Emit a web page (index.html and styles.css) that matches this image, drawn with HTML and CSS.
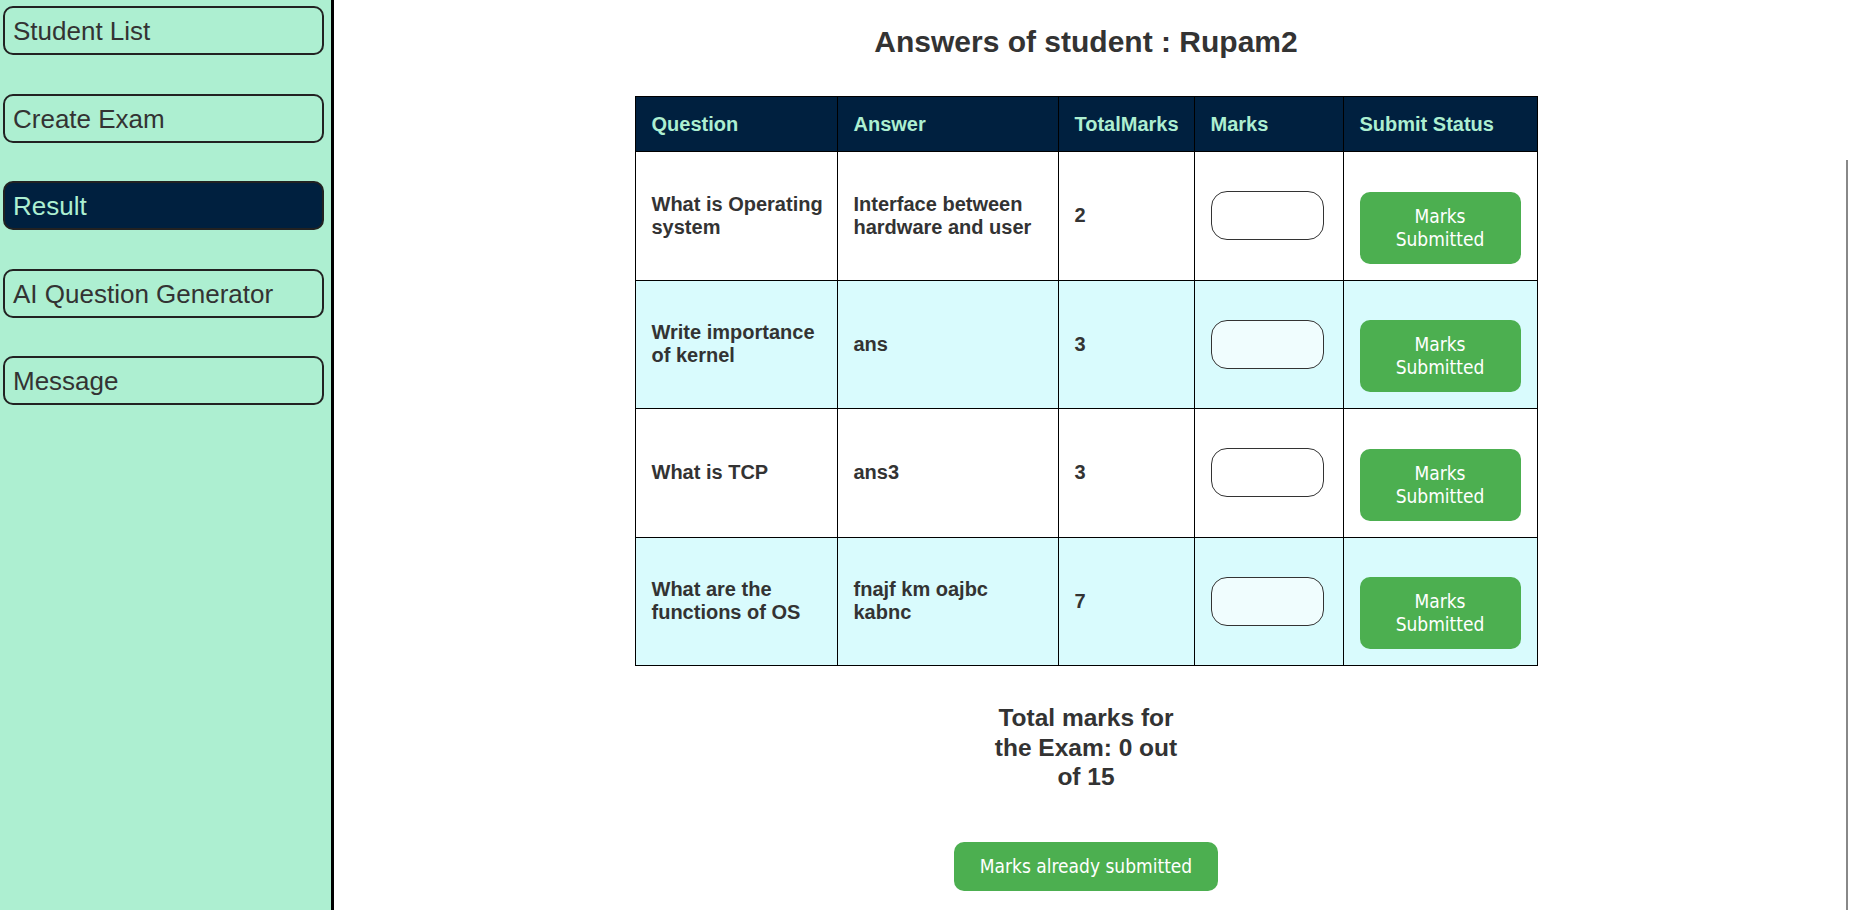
FILE: index.html
```html
<!DOCTYPE html>
<html lang="en">
<head>
<meta charset="utf-8">
<title>Answers of student</title>
<link rel="stylesheet" href="styles.css">
</head>
<body>
<div class="app">
  <aside class="sidebar">
    <div class="nav-item">Student List</div>
    <div class="nav-item">Create Exam</div>
    <div class="nav-item active">Result</div>
    <div class="nav-item">AI Question Generator</div>
    <div class="nav-item">Message</div>
  </aside>
  <main class="main">
    <h2 class="title">Answers of student : Rupam2</h2>
    <table class="answers">
      <colgroup>
        <col class="c-q"><col class="c-a"><col class="c-t"><col class="c-m"><col class="c-s">
      </colgroup>
      <thead>
        <tr><th>Question</th><th>Answer</th><th>TotalMarks</th><th>Marks</th><th>Submit Status</th></tr>
      </thead>
      <tbody>
        <tr>
          <td>What is Operating system</td>
          <td>Interface between hardware and user</td>
          <td>2</td>
          <td><input class="mark-input" type="text"></td>
          <td><button class="status-btn">Marks Submitted</button></td>
        </tr>
        <tr>
          <td>Write importance of kernel</td>
          <td>ans</td>
          <td>3</td>
          <td><input class="mark-input" type="text"></td>
          <td><button class="status-btn">Marks Submitted</button></td>
        </tr>
        <tr>
          <td>What is TCP</td>
          <td>ans3</td>
          <td>3</td>
          <td><input class="mark-input" type="text"></td>
          <td><button class="status-btn">Marks Submitted</button></td>
        </tr>
        <tr>
          <td>What are the functions of OS</td>
          <td>fnajf km oajbc kabnc</td>
          <td>7</td>
          <td><input class="mark-input" type="text"></td>
          <td><button class="status-btn">Marks Submitted</button></td>
        </tr>
      </tbody>
    </table>
    <h3 class="total">Total marks for the Exam: 0 out of 15</h3>
    <button class="submit-btn">Marks already submitted</button>
  </main>
</div>
<div class="scroll-line"></div>
</body>
</html>
```
FILE: styles.css
```css
html, body {
  margin: 0;
  padding: 0;
  height: 100%;
  overflow: hidden;
  background: #fff;
  font-family: "Liberation Sans", Arial, sans-serif;
}

.app {
  display: flex;
  height: 910px;
}

.sidebar {
  width: 331px;
  flex: 0 0 331px;
  background: #adefd1;
  border-right: 3px solid #000;
  padding-top: 6px;
  display: flex;
  flex-direction: column;
  gap: 38.5px;
  box-sizing: content-box;
}

.nav-item {
  margin: 0 7px 0 3px;
  border: 2px solid #222;
  border-radius: 10px;
  padding: 8px 8px 6px;
  font-size: 26px;
  line-height: 31px;
  color: #333;
}

.nav-item.active {
  background: #00203f;
  color: #adefd1;
}

.main {
  flex: 1;
  display: flex;
  flex-direction: column;
  align-items: center;
  padding-right: 14px;
}

.title {
  margin: 25px 0 0;
  font-size: 30px;
  line-height: 34px;
  font-weight: bold;
  color: #333;
}

.answers {
  margin-top: 37px;
  border-collapse: collapse;
  table-layout: fixed;
  width: 902px;
}

.c-q { width: 202px; }
.c-a { width: 221px; }
.c-t { width: 136px; }
.c-m { width: 149px; }
.c-s { width: 194px; }

.answers th,
.answers td {
  border: 1px solid #000;
  padding: 16px;
  text-align: left;
  font-size: 20px;
  line-height: 23px;
  font-weight: bold;
}

.answers th {
  padding-top: 15.5px;
  padding-bottom: 15.5px;
  background: #00203f;
  color: #adefd1;
}

.answers td:first-child {
  padding-right: 10px;
}

.answers td {
  color: #333;
  vertical-align: middle;
  background: #fff;
}

.answers tbody tr:nth-child(even) td {
  background: #d9fbfd;
}

.mark-input {
  display: block;
  width: 113px;
  height: 49px;
  box-sizing: border-box;
  border: 1px solid #333;
  border-radius: 16px;
  background: rgba(255, 255, 255, 0.6);
  padding: 0 10px;
  font-size: 18px;
}

.status-btn {
  display: block;
  width: 100%;
  margin-top: 23.5px;
  padding: 13px 20px;
  border: none;
  border-radius: 10px;
  background: #4caf50;
  color: #fff;
  font-family: "DejaVu Sans Condensed", "DejaVu Sans", sans-serif;
  font-size: 19px;
  line-height: 23px;
}

.total {
  margin: 37px 0 0;
  width: 200px;
  text-align: center;
  font-size: 24.5px;
  line-height: 29.5px;
  font-weight: bold;
  color: #333;
}

.submit-btn {
  margin-top: 50px;
  padding: 13px 26px;
  border: none;
  border-radius: 10px;
  background: #4caf50;
  color: #fff;
  font-family: "DejaVu Sans Condensed", "DejaVu Sans", sans-serif;
  font-size: 19px;
  line-height: 23px;
}

.scroll-line {
  position: absolute;
  top: 160px;
  bottom: 0;
  left: 1846px;
  width: 2px;
  background: #888;
}
```
